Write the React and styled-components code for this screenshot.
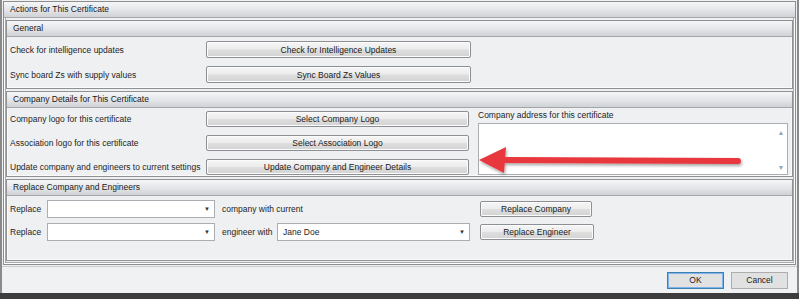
import React from "react";
import styled, { createGlobalStyle } from "styled-components";

const Global = createGlobalStyle`
  html, body { margin: 0; padding: 0; overflow: hidden; }
  body {
    font-family: "Liberation Sans", Arial, sans-serif;
    font-size: 8.5px;
    color: #1e1e1e;
    background: #eef0f2;
  }
`;

const Window = styled.div`
  position: relative;
  width: 799px;
  height: 299px;
  box-sizing: border-box;
  display: flex;
  flex-direction: column;
  background: #eef0f2;
  border-left: 2px solid #8a8a8a;
  border-right: 2px solid #8a8a8a;
`;

const Main = styled.div`
  flex: 1;
  padding: 1px 1px 0 1px;
  display: flex;
  flex-direction: column;
`;

const Outer = styled.div`
  flex: 1;
  display: flex;
  flex-direction: column;
  border: 1px solid #8e8e8e;
  box-shadow: inset 0 0 0 1px #fdfdfd, inset 0 0 0 2px #a8a8a8;
`;

const Header = styled.div`
  height: 15px;
  line-height: 15px;
  padding-left: 6px;
  background: linear-gradient(#f5f6f7, #e3e5e8 55%, #cfd2d6);
  border-bottom: 1px solid #a4a6a9;
  color: #1a1a1a;
  white-space: nowrap;
`;

const OuterBody = styled.div`
  flex: 1;
  display: flex;
  flex-direction: column;
  gap: 2px;
  padding: 2px 2px 3px 2px;
`;

const Group = styled.div`
  display: flex;
  flex-direction: column;
  border: 1px solid #8f9194;
  box-shadow: inset 0 0 0 1px #fbfbfb;
  flex: ${(p) => (p.$grow ? 1 : "none")};
`;

const GroupBody = styled.div`
  display: flex;
  flex-direction: ${(p) => (p.$row ? "row" : "column")};
  gap: ${(p) => (p.$row ? "9px" : "8px")};
  padding: ${(p) => p.$pad || "4px 3px 5px 3px"};
`;

const Rows = styled.div`
  display: flex;
  flex-direction: column;
  gap: ${(p) => p.$gap || "8px"};
`;

const Row = styled.div`
  display: flex;
  align-items: center;
  height: 17px;
`;

const Label = styled.span`
  width: 196px;
  white-space: nowrap;
`;

const Button = styled.button`
  box-sizing: border-box;
  width: ${(p) => p.$w}px;
  height: ${(p) => p.$h || 17}px;
  padding: 0;
  font: inherit;
  color: #1a1a1a;
  border: 1px solid #8c8f93;
  border-radius: 2px;
  background: linear-gradient(#f6f6f6, #ececec 48%, #dedede 52%, #d3d3d3);
  box-shadow: inset 0 0 0 1px #fcfcfc;
`;

const AddressBox = styled.div`
  flex: 1;
  display: flex;
  flex-direction: column;
  gap: 3px;
  margin-right: 1px;
`;

const TextArea = styled.div`
  height: 50px;
  display: flex;
  justify-content: flex-end;
  background: #fff;
  border: 1px solid #abadb3;
`;

const ScrollBar = styled.div`
  width: 12px;
  display: flex;
  flex-direction: column;
  justify-content: space-between;
  align-items: center;
  padding: 5px 0 3px;
  color: #9fa6b3;
  font-size: 7px;
  line-height: 7px;
`;

const ReplaceGrid = styled.div`
  display: grid;
  grid-template-columns: 37px 168px 62px 193px 124px;
  grid-auto-rows: 18px;
  row-gap: 5px;
  align-items: center;
`;

const Cell = styled.span`
  white-space: nowrap;
  padding-left: ${(p) => p.$pl || 0}px;
  grid-column: ${(p) => p.$span || "auto"};
`;

const Combo = styled.div`
  box-sizing: border-box;
  height: 18px;
  display: flex;
  align-items: center;
  justify-content: space-between;
  padding: 0 4px 0 5px;
  background: #fff;
  border: 1px solid #abadb3;
`;

const Caret = styled.span`
  font-size: 6px;
  color: #333;
`;

const Footer = styled.div`
  height: 26px;
  display: flex;
  justify-content: flex-end;
  align-items: center;
  gap: 7px;
  padding-right: 9px;
  border-top: 1px solid #c9cbce;
  margin-top: 1px;
  background: #f0f1f3;
`;

const DialogButton = styled.button`
  width: 57px;
  height: 17px;
  padding: 0;
  font: inherit;
  color: #1a1a1a;
  background: #e1e1e1;
  border: 1px solid ${(p) => (p.$default ? "#3c7fb1" : "#adadad")};
  box-shadow: ${(p) => (p.$default ? "inset 0 0 0 1px #7eb4ea" : "none")};
`;

const BottomStrip = styled.div`
  height: 6px;
  background: #3d3d3d;
  margin: 0 -2px;
`;

const Arrow = styled.svg`
  position: absolute;
  left: 472px;
  top: 143px;
`;

export default function App() {
  return (
    <Window>
      <Global />
      <Main>
        <Outer>
          <Header>Actions for This Certificate</Header>
          <OuterBody>
            <Group>
              <Header>General</Header>
              <GroupBody>
                <Row>
                  <Label>Check for intelligence updates</Label>
                  <Button $w={265}>Check for Intelligence Updates</Button>
                </Row>
                <Row>
                  <Label>Sync board Zs with supply values</Label>
                  <Button $w={265}>Sync Board Zs Values</Button>
                </Row>
              </GroupBody>
            </Group>

            <Group>
              <Header>Company Details for This Certificate</Header>
              <GroupBody $row $pad="2px 3px 1px 3px">
                <Rows $gap="7px">
                  <Row>
                    <Label>Company logo for this certificate</Label>
                    <Button $w={263} $h={16}>Select Company Logo</Button>
                  </Row>
                  <Row>
                    <Label>Association logo for this certificate</Label>
                    <Button $w={263} $h={16}>Select Association Logo</Button>
                  </Row>
                  <Row>
                    <Label>Update company and engineers to current settings</Label>
                    <Button $w={263} $h={16}>Update Company and Engineer Details</Button>
                  </Row>
                </Rows>
                <AddressBox>
                  <span>Company address for this certificate</span>
                  <TextArea>
                    <ScrollBar>
                      <span>▲</span>
                      <span>▼</span>
                    </ScrollBar>
                  </TextArea>
                </AddressBox>
              </GroupBody>
            </Group>

            <Group $grow>
              <Header>Replace Company and Engineers</Header>
              <GroupBody $pad="4px 3px 4px 3px">
                <ReplaceGrid>
                  <Cell>Replace</Cell>
                  <Combo>
                    <span />
                    <Caret>▼</Caret>
                  </Combo>
                  <Cell $pl={7} $span="span 2">company with current</Cell>
                  <Cell $pl={10}>
                    <Button $w={112} $h={16}>Replace Company</Button>
                  </Cell>

                  <Cell>Replace</Cell>
                  <Combo>
                    <span />
                    <Caret>▼</Caret>
                  </Combo>
                  <Cell $pl={7}>engineer with</Cell>
                  <Combo>
                    <span>Jane Doe</span>
                    <Caret>▼</Caret>
                  </Combo>
                  <Cell $pl={10}>
                    <Button $w={114} $h={16}>Replace Engineer</Button>
                  </Cell>
                </ReplaceGrid>
              </GroupBody>
            </Group>
          </OuterBody>
        </Outer>
      </Main>
      <Footer>
        <DialogButton $default>OK</DialogButton>
        <DialogButton>Cancel</DialogButton>
      </Footer>
      <BottomStrip />

      <Arrow width="280" height="36" viewBox="0 0 280 36">
        <defs>
          <filter id="sh" x="-10%" y="-50%" width="120%" height="200%">
            <feDropShadow dx="1" dy="2" stdDeviation="1.5" floodColor="#000" floodOpacity="0.35" />
          </filter>
        </defs>
        <g filter="url(#sh)">
          <line x1="30" y1="17" x2="264" y2="18" stroke="#e8383d" strokeWidth="6" strokeLinecap="round" />
          <polygon points="5,17 32,4 30,30" fill="#e8383d" />
        </g>
      </Arrow>
    </Window>
  );
}
